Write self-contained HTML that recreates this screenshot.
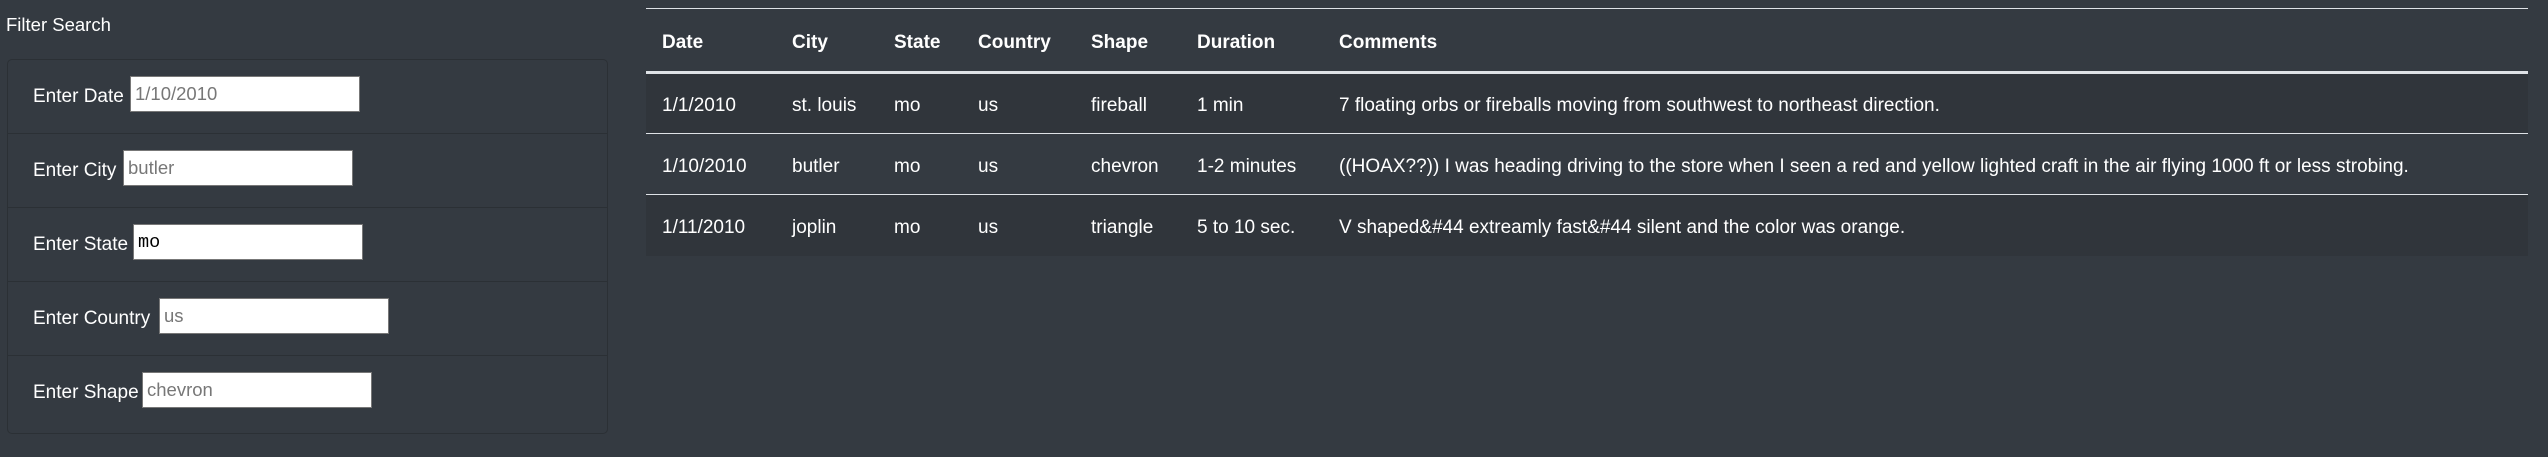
<!DOCTYPE html>
<html><head><meta charset="utf-8"><style>
body{margin:0;width:2548px;height:457px;background:#343a41;color:#fff;font-family:"Liberation Sans",sans-serif;overflow:hidden;position:relative}
.title{position:absolute;left:6px;top:14px;font-size:18.5px}
.panel{position:absolute;left:7px;top:59px;width:599px;height:373px;border:1px solid #2b3035;border-radius:5px}
.row{height:74px;border-bottom:1px solid #2b3035;position:relative;box-sizing:border-box}
.row:last-child{border-bottom:none}
.row label{position:absolute;left:25px;top:26px;font-size:19px}
.row input{position:absolute;top:16px;width:230px;height:36px;box-sizing:border-box;border:1px solid #777;background:#fff;font-family:"Liberation Sans",sans-serif;font-size:18.5px;color:#777;padding:0 4px;margin:0}
table{position:absolute;left:646px;top:8px;width:1882px;border-collapse:collapse;font-size:19px}
th{text-align:left;font-weight:bold;height:64px;border-top:1px solid #dee2e6;border-bottom:3px solid #dee2e6;padding:5px 0 0 16px;box-sizing:border-box}
td{height:61px;padding:5px 0 0 16px;border-top:1px solid #dee2e6;box-sizing:border-box}
tbody tr:first-child td{border-top:none}
tbody tr:nth-child(odd){background:#30353b}
</style></head><body>
<div class="title">Filter Search</div>
<div class="panel">
<div class="row"><label>Enter Date</label><input style="left:122px" value="1/10/2010"></div>
<div class="row"><label>Enter City</label><input style="left:115px" value="butler"></div>
<div class="row"><label>Enter State</label><input style="left:125px;color:#000;font-family:'Liberation Mono',monospace" value="mo"></div>
<div class="row"><label>Enter Country</label><input style="left:151px" value="us"></div>
<div class="row"><label>Enter Shape</label><input style="left:134px" value="chevron"></div>
</div>
<table>
<colgroup><col style="width:130px"><col style="width:102px"><col style="width:84px"><col style="width:113px"><col style="width:106px"><col style="width:142px"><col></colgroup>
<thead><tr><th>Date</th><th>City</th><th>State</th><th>Country</th><th>Shape</th><th>Duration</th><th>Comments</th></tr></thead>
<tbody>
<tr><td>1/1/2010</td><td>st. louis</td><td>mo</td><td>us</td><td>fireball</td><td>1 min</td><td>7 floating orbs or fireballs moving from southwest to northeast direction.</td></tr>
<tr><td>1/10/2010</td><td>butler</td><td>mo</td><td>us</td><td>chevron</td><td>1-2 minutes</td><td>((HOAX??)) I was heading driving to the store when I seen a red and yellow lighted craft in the air flying 1000 ft or less strobing.</td></tr>
<tr><td>1/11/2010</td><td>joplin</td><td>mo</td><td>us</td><td>triangle</td><td>5 to 10 sec.</td><td>V shaped&amp;#44 extreamly fast&amp;#44 silent and the color was orange.</td></tr>
</tbody></table>
</body></html>
